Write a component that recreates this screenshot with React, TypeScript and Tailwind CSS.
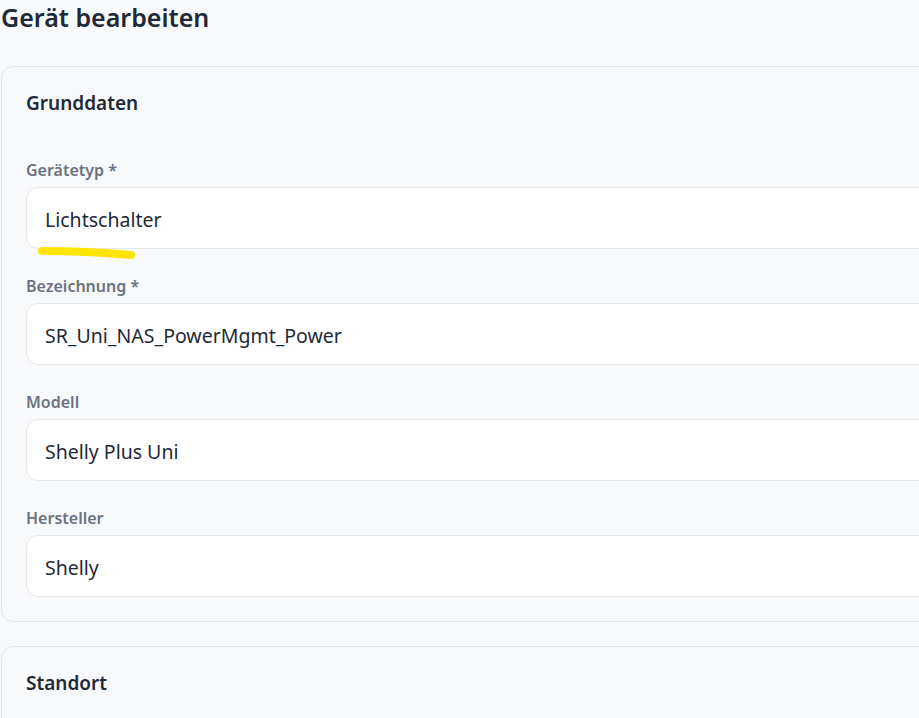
import React from "react";

const fields = [
  { label: "Gerätetyp *", value: "Lichtschalter", mark: true },
  { label: "Bezeichnung *", value: "SR_Uni_NAS_PowerMgmt_Power" },
  { label: "Modell", value: "Shelly Plus Uni" },
  { label: "Hersteller", value: "Shelly" },
];

export default function App() {
  return (
    <div
      className="h-screen w-full overflow-hidden bg-[#f8f9fb] text-[#1f2937]"
      style={{ fontFamily: '"Noto Sans", "Open Sans", sans-serif' }}
    >
      <div className="w-[980px] pl-[1px]">
        <h1 className="text-[25px] leading-[34px] font-semibold text-[#1f2937]">Gerät bearbeiten</h1>
        <div className="mt-[32px] rounded-[12px] border border-[#e5e7eb] bg-[#f8f9fb] px-[24px] pt-[22px] pb-[24px]">
          <h2 className="text-[19px] leading-[28px] font-semibold text-[#1f2937]">Grunddaten</h2>
          <div className="mt-[43px] flex flex-col gap-[27px]">
            {fields.map((f) => (
              <div key={f.label} className="flex flex-col">
                <label className="text-[16px] leading-[20px] font-semibold text-[#6b7280]">{f.label}</label>
                <div className="relative mt-[7px] h-[62px] rounded-[12px] border border-[#e5e7eb] bg-white pl-[18px] pt-[3px] flex items-center">
                  <span className="text-[19.5px] text-[#1f2937]">{f.value}</span>
                  {f.mark && (
                    <svg className="absolute left-[11px] top-[58px]" width="100" height="16" viewBox="0 0 100 16">
                      <path d="M4 5 C 30 5, 60 6, 93 9" stroke="#ffe500" strokeWidth="8" strokeLinecap="round" fill="none" />
                    </svg>
                  )}
                </div>
              </div>
            ))}
          </div>
        </div>
        <div className="mt-[24px] rounded-[12px] border border-[#e5e7eb] bg-[#f8f9fb] px-[24px] pt-[22px] pb-[24px] h-[200px]">
          <h2 className="text-[19px] leading-[28px] font-semibold text-[#1f2937]">Standort</h2>
        </div>
      </div>
    </div>
  );
}
